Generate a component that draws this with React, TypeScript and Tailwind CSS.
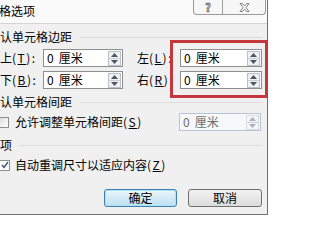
import React from 'react';

const font = { fontFamily: '"Noto Sans CJK SC", "Liberation Sans", sans-serif' };

const Spinner: React.FC<{ disabled?: boolean }> = ({ disabled }) => (
  <div className={`w-[13px] h-[15px] flex flex-col border ${disabled ? 'border-[#d8dde6] bg-[#f4f6f9]' : 'border-[#b9c0c9] bg-[#eef0f3]'}`}>
    <div className="flex-1 flex items-center justify-center border-b border-[#c9ced6]">
      <svg width="7" height="4" viewBox="0 0 7 4"><path d="M0 4 L3.5 0 L7 4 Z" fill={disabled ? '#a9b0bb' : '#4d5560'} /></svg>
    </div>
    <div className="flex-1 flex items-center justify-center">
      <svg width="7" height="4" viewBox="0 0 7 4"><path d="M0 0 L3.5 4 L7 0 Z" fill={disabled ? '#a9b0bb' : '#4d5560'} /></svg>
    </div>
  </div>
);

const NumInput: React.FC<{ w: string; disabled?: boolean }> = ({ w, disabled }) => (
  <div className={`${w} h-[18px] flex items-center justify-between pl-[3px] pr-[1px] border ${disabled ? 'border-[#b5c3d6] bg-[#f7f8fa] text-[#6d6d6d]' : 'border-[#8e8f8f] bg-white text-black'}`}>
    <span className="text-[12px] leading-[12px] flex">
      <span>0</span>
      <span className="ml-[5px]">厘米</span>
    </span>
    <Spinner disabled={disabled} />
  </div>
);

const Header: React.FC<{ text: string }> = ({ text }) => (
  <div className="flex items-center h-[12px] pr-[4px]">
    <span className="text-[12px] leading-[12px] whitespace-nowrap">{text}</span>
    <div className="flex-1 h-px bg-[#dcdcdc] ml-[8px]" />
  </div>
);

const Key: React.FC<{ k: string }> = ({ k }) => (
  <span className="tracking-[1.5px]">(<u>{k}</u>)</span>
);

const Label: React.FC<{ ch: string; k: string; right?: boolean }> = ({ ch, k, right }) => (
  <span className={`${right ? 'ml-[14px]' : ''} w-[43px] shrink-0 text-[12px] leading-[12px] whitespace-nowrap`}>
    {ch}<Key k={k} />:
  </span>
);

export default function App() {
  return (
    <div className="w-[272px] h-[219px] bg-white relative overflow-hidden text-black" style={font}>
      <div className="w-[268px] h-[215px] bg-[#f0f0f0] border-r border-b border-[#6f6f6f] flex flex-col">
        {/* title bar */}
        <div className="h-[24px] shrink-0 bg-[#fafafa] border-b border-[#d4d4d4] flex justify-between items-start">
          <span className="mt-[5px] -ml-[1px] text-[12px] leading-[12px]">格选项</span>
          <div className="flex mr-[1px]">
            <div className="w-[30px] h-[15px] border border-t-0 border-[#9a9a9a] rounded-bl-[4px] bg-[#f7f7f7] flex items-center justify-center">
              <span className="text-[11px] leading-[11px] font-bold text-[#f7f7f7]" style={{ WebkitTextStroke: '0.8px #6a6a6a' }}>?</span>
            </div>
            <div className="w-[43px] h-[15px] border border-t-0 border-l-0 border-[#9a9a9a] rounded-br-[4px] bg-[#f7f7f7] flex items-center justify-center">
              <svg width="11" height="9" viewBox="0 0 11 9">
                <path d="M1 0.5 L3.5 0.5 L5.5 3 L7.5 0.5 L10 0.5 L7 4.5 L10 8.5 L7.5 8.5 L5.5 6 L3.5 8.5 L1 8.5 L4 4.5 Z" fill="#f7f7f7" stroke="#6a6a6a" strokeWidth="0.8" />
              </svg>
            </div>
          </div>
        </div>

        {/* content */}
        <div className="flex-1 flex flex-col">
          <div className="mt-[7px]"><Header text="认单元格边距" /></div>

          <div className="mt-[6px] flex items-center h-[18px]">
            <Label ch="上" k="T" />
            <NumInput w="w-[80px]" />
            <Label ch="左" k="L" right />
            <NumInput w="w-[82px]" />
          </div>
          <div className="mt-[4px] flex items-center h-[18px]">
            <Label ch="下" k="B" />
            <NumInput w="w-[80px]" />
            <Label ch="右" k="R" right />
            <NumInput w="w-[82px]" />
          </div>

          <div className="mt-[7px]"><Header text="认单元格间距" /></div>

          <div className="mt-[5px] flex items-center h-[18px]">
            <div className="-ml-[2px] w-[11px] h-[11px] border border-[#8e8f8f] bg-gradient-to-br from-[#dcdcdc] to-white" />
            <span className="ml-[6px] text-[12px] leading-[12px] whitespace-nowrap">允许调整单元格间距<Key k="S" /></span>
            <div className="ml-auto mr-[6px]"><NumInput w="w-[82px]" disabled /></div>
          </div>

          <div className="mt-[8px]"><Header text="项" /></div>

          <div className="mt-[7px] flex items-center h-[14px]">
            <div className="-ml-[1px] w-[11px] h-[11px] border border-[#8e8f8f] bg-white flex items-center justify-center">
              <svg width="8" height="8" viewBox="0 0 8 8"><path d="M1 4 L3 6.5 L7 1" fill="none" stroke="#4a5f8c" strokeWidth="1.6" /></svg>
            </div>
            <span className="ml-[5px] text-[12px] leading-[12px] whitespace-nowrap">自动重调尺寸以适应内容<Key k="Z" /></span>
          </div>

          <div className="mt-auto mb-[7px] flex justify-end gap-[11px] pr-[5px]">
            <button className="w-[73px] h-[18px] rounded-[3px] border border-[#3c7fb1] bg-gradient-to-b from-[#eaf6fd] to-[#bfe0f1] text-[12px] leading-[12px] shadow-[inset_0_0_0_1px_#aee4f8]">确定</button>
            <button className="w-[74px] h-[18px] rounded-[3px] border border-[#707070] bg-gradient-to-b from-[#f2f2f2] to-[#dcdcdc] text-[12px] leading-[12px]">取消</button>
          </div>
        </div>
      </div>

      {/* red highlight box */}
      <div className="absolute left-[170px] top-[40px] w-[98px] h-[58px] border-[3.5px] border-[#c4373d]" />
    </div>
  );
}
